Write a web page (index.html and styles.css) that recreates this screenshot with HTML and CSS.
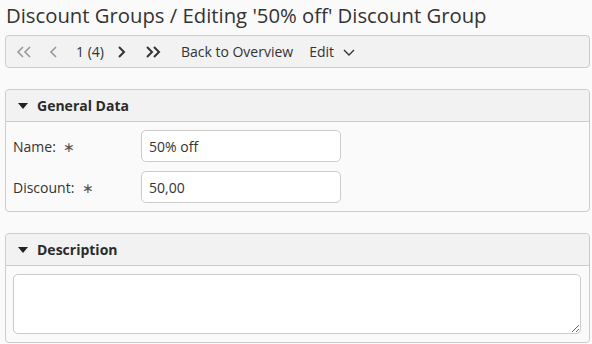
FILE: index.html
```html
<!DOCTYPE html>
<html>
<head>
	<meta charset="utf-8">
	<title>Editing Discount Group</title>
	<link rel="stylesheet" href="styles.css">
</head>
<body>
	<h1 class="title">Discount Groups / Editing '50% off' Discount Group</h1>

	<!-- toolbar -->
	<div class="toolbar">
		<span class="nav off first">
			<svg width="16" height="14" viewBox="0 0 16 14"><polyline points="7,2 2,7 7,12" /><polyline points="14,2 9,7 14,12" /></svg>
		</span>
		<span class="nav off prev">
			<svg width="14" height="14" viewBox="0 0 14 14"><polyline points="10,2 5,7 10,12" /></svg>
		</span>
		<span class="pos">1 (4)</span>
		<span class="nav next">
			<svg width="14" height="14" viewBox="0 0 14 14"><polyline points="5,2 10,7 5,12" /></svg>
		</span>
		<span class="nav last">
			<svg width="18" height="14" viewBox="0 0 18 14"><polyline points="4,2 9,7 4,12" /><polyline points="11,2 16,7 11,12" /></svg>
		</span>
		<span class="link">Back to Overview</span>
		<span class="link">Edit
			<svg class="caret" width="12" height="12" viewBox="0 0 12 12"><polyline points="1,4 6,9 11,4" /></svg>
		</span>
	</div>

	<!-- General Data -->
	<div class="panel">
		<div class="panel-head"><span class="tri"></span>General Data</div>
		<div class="panel-body">
			<div class="row">
				<label>Name: <span class="req">∗</span></label>
				<input type="text" class="field" value="50% off">
			</div>
			<div class="row">
				<label>Discount: <span class="req">∗</span></label>
				<input type="text" class="field" value="50,00">
			</div>
		</div>
	</div>

	<!-- Description -->
	<div class="panel">
		<div class="panel-head"><span class="tri"></span>Description</div>
		<div class="panel-body">
			<textarea class="area"></textarea>
		</div>
	</div>
</body>
</html>
```

FILE: styles.css
```css
body{
	margin: 0;
	padding: 0 2px 0 5px;
	background-color: #fafafa;
	font-family: "Open Sans", sans-serif;
	font-size: 14px;
	color: #333;
}

.title{
	margin: 0;
	padding: 1px 0 0 1px;
	height: 34px;
	font-size: 20.3px;
	font-weight: normal;
	line-height: 28px;
}

/* toolbar with record navigation */
.toolbar{
	display: flex;
	align-items: center;
	height: 31px;
	padding: 0 10px;
	background-color: #f2f2f2;
	border: 1px solid #ccc;
	border-radius: 4px;
}

.nav{
	display: flex;
	align-items: center;
}
.nav svg{
	fill: none;
	stroke: #333;
	stroke-width: 2;
}
.nav.off svg{
	stroke: #999;
	stroke-width: 1.6;
}
.first{ margin-right: 14px; }
.prev{ margin-right: 16px; }
.pos{ margin-right: 10px; }
.next{ margin-right: 15px; }
.last{ margin-right: 20px; }

.link{
	display: flex;
	align-items: center;
	margin-right: 16px;
}
.caret{
	margin-left: 9px;
	fill: none;
	stroke: #333;
	stroke-width: 1.4;
}

/* panels */
.panel{
	margin-top: 21px;
	border: 1px solid #ccc;
	border-radius: 4px;
	background-color: #fafafa;
}
.panel-head{
	display: flex;
	align-items: center;
	height: 31px;
	padding-left: 12px;
	background-color: #f2f2f2;
	border-bottom: 1px solid #ccc;
	border-radius: 4px 4px 0 0;
	font-weight: bold;
	color: #2b2b2b;
}
.tri{
	width: 0;
	height: 0;
	margin-right: 9px;
	border-left: 5px solid transparent;
	border-right: 5px solid transparent;
	border-top: 6px solid #222;
}
.panel-body{
	padding: 8px 8px 8px 7px;
}

.row{
	display: flex;
	align-items: center;
	margin-bottom: 9px;
}
.row:last-child{
	margin-bottom: 0;
}
.row label{
	width: 128px;
}
.req{
	margin-left: 4px;
	color: #555;
}
.field{
	box-sizing: border-box;
	width: 200px;
	height: 32px;
	padding: 0 7px;
	border: 1px solid #ccc;
	border-radius: 5px;
	background-color: #fff;
	font-family: inherit;
	font-size: 14px;
	color: #333;
}
.area{
	display: block;
	box-sizing: border-box;
	width: 100%;
	height: 60px;
	border: 1px solid #ccc;
	border-radius: 5px;
	background-color: #fff;
	font-family: inherit;
}
```
